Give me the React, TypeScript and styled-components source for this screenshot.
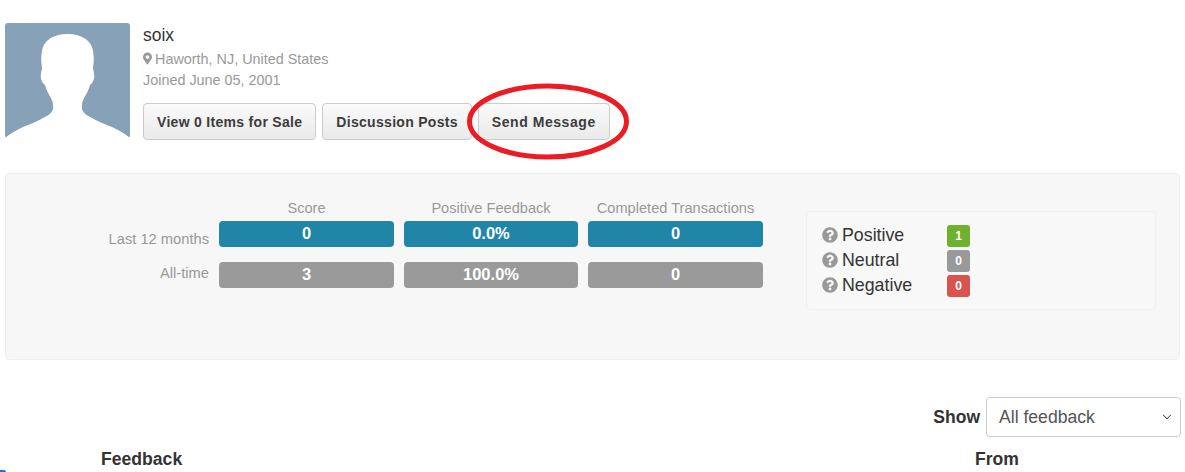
import styled, { createGlobalStyle } from "styled-components";
import { FaMapMarkerAlt, FaQuestionCircle } from "react-icons/fa";
import { ChevronDown } from "lucide-react";

const GlobalStyle = createGlobalStyle`
  html, body {
    margin: 0;
    padding: 0;
    background: #fff;
    overflow: hidden;
  }
  body {
    font-family: "Liberation Sans", Arial, sans-serif;
    color: #333;
  }
`;

const stats = [
  { label: "Last 12 months", labelOffset: 8, tone: "#2085a6", values: ["0", "0.0%", "0"] },
  { label: "All-time", labelOffset: 1, tone: "#9a9a9a", values: ["3", "100.0%", "0"] },
];

const ratings = [
  { label: "Positive", count: 1, color: "#6fb02f" },
  { label: "Neutral", count: 0, color: "#999999" },
  { label: "Negative", count: 0, color: "#d9534f" },
];

const App = () => {
  return (
    <>
      <GlobalStyle />
      <Page>
        <Profile>
          <Avatar>
            <svg viewBox="0 0 125 115" width="125" height="115">
              <rect width="125" height="115" rx="3" fill="#87a1b9" />
              <path
                d="M0 115 C6 110 12 107 18 104 C26 101 33 98 38 95 C46 91 49 88 48 82 C48 79 47 78 46 75 C43 70 41 66 40 62 C37 60 35 55 36 51 C36 48 37 47 37 45 C36 38 36 34 37 28 C38 18 48 11 62.5 11 C77 11 87 18 88 28 C89 34 89 38 88 45 C88 47 89 48 89 51 C90 55 88 60 85 62 C84 66 82 70 79 75 C78 78 77 79 77 82 C76 88 79 91 87 95 C92 98 99 101 107 104 C113 107 119 110 125 115 Z"
                fill="#fff"
              />
            </svg>
          </Avatar>
          <Details>
            <Name>soix</Name>
            <Muted>
              <PinIcon />
              Haworth, NJ, United States
            </Muted>
            <Muted>Joined June 05, 2001</Muted>
            <Actions>
              <ActionButton>View 0 Items for Sale</ActionButton>
              <ActionButton>Discussion Posts</ActionButton>
              <HighlightWrap>
                <ActionButton $spacing={0.55}>Send Message</ActionButton>
                <RedCircle viewBox="0 0 164 80" width="164" height="80">
                  <ellipse cx="82" cy="39.5" rx="78.5" ry="35.5" fill="none" stroke="#ed1c24" strokeWidth="5" />
                </RedCircle>
              </HighlightWrap>
            </Actions>
          </Details>
        </Profile>

        <Well>
          <StatsTable>
            <HeadRow>
              <span />
              <ColumnTitle>Score</ColumnTitle>
              <ColumnTitle>Positive Feedback</ColumnTitle>
              <ColumnTitle>Completed Transactions</ColumnTitle>
            </HeadRow>
            {stats.map((row) => (
              <StatRow key={row.label}>
                <RowLabel $offset={row.labelOffset}>{row.label}</RowLabel>
                {row.values.map((v, i) => (
                  <StatBar key={i} $tone={row.tone}>
                    {v}
                  </StatBar>
                ))}
              </StatRow>
            ))}
          </StatsTable>
          <Legend>
            {ratings.map((r) => (
              <LegendRow key={r.label}>
                <HelpIcon />
                <LegendLabel>{r.label}</LegendLabel>
                <CountBadge $color={r.color}>{r.count}</CountBadge>
              </LegendRow>
            ))}
          </Legend>
        </Well>

        <Filter>
          <FilterLabel>Show</FilterLabel>
          <Select>
            All feedback
            <ChevronDown size={14} strokeWidth={1.75} color="#444" />
          </Select>
        </Filter>

        <TableHead>
          <FeedbackCol>Feedback</FeedbackCol>
          <span>From</span>
        </TableHead>
        <CornerMark />
      </Page>
    </>
  );
};

const Page = styled.div`
  position: relative;
  width: 1185px;
  height: 472px;
  overflow: hidden;
  padding: 23px 5px 0;
  box-sizing: border-box;
`;

const Profile = styled.div`
  display: flex;
  gap: 13px;
  height: 150px;
`;

const Avatar = styled.div`
  width: 125px;
  height: 115px;
  line-height: 0;
`;

const Details = styled.div`
  display: flex;
  flex-direction: column;
`;

const Name = styled.div`
  font-size: 17.5px;
  line-height: 24px;
  margin-bottom: 2px;
  color: #333;
`;

const Muted = styled.div`
  font-size: 14.4px;
  line-height: 21px;
  color: #999;
`;

const PinIcon = styled(FaMapMarkerAlt)`
  width: 9px;
  height: 13px;
  margin-right: 3px;
  vertical-align: -1px;
`;

const Actions = styled.div`
  display: flex;
  gap: 6px;
  margin-top: 12px;
`;

const ActionButton = styled.button<{ $spacing?: number }>`
  height: 37px;
  padding: 0 13px;
  border: 1px solid #ccc;
  border-radius: 4px;
  background: linear-gradient(to bottom, #fafafa, #eaeaea);
  font-family: inherit;
  font-size: 14px;
  font-weight: 700;
  letter-spacing: ${({ $spacing }) => $spacing ?? 0.3}px;
  color: #3c3c3c;
`;

const HighlightWrap = styled.div`
  position: relative;
`;

const RedCircle = styled.svg`
  position: absolute;
  left: -12px;
  top: -21px;
  pointer-events: none;
`;

const Well = styled.div`
  display: flex;
  align-items: flex-start;
  justify-content: space-between;
  width: 1175px;
  height: 187px;
  box-sizing: border-box;
  padding: 24px 23px 0 0;
  background: #f7f7f7;
  border: 1px solid #eeeeee;
  border-radius: 4px;
`;

const StatsTable = styled.div`
  display: flex;
  flex-direction: column;
`;

const columns = "203px 175px 174px 175px";

const HeadRow = styled.div`
  display: grid;
  grid-template-columns: ${columns};
  column-gap: 10px;
  margin-bottom: 3px;
`;

const ColumnTitle = styled.div`
  font-size: 14.6px;
  line-height: 20px;
  text-align: center;
  white-space: nowrap;
  color: #999;
`;

const StatRow = styled.div`
  display: grid;
  grid-template-columns: ${columns};
  column-gap: 10px;
  height: 41px;
`;

const RowLabel = styled.div<{ $offset: number }>`
  font-size: 14.7px;
  line-height: 20px;
  padding-top: ${({ $offset }) => $offset}px;
  text-align: right;
  color: #999;
`;

const StatBar = styled.div<{ $tone: string }>`
  height: 26px;
  line-height: 24px;
  border-radius: 4px;
  background: ${({ $tone }) => $tone};
  color: #fff;
  font-size: 16.5px;
  font-weight: 700;
  text-align: center;
`;

const Legend = styled.div`
  width: 350px;
  height: 99px;
  margin-top: 13px;
  box-sizing: border-box;
  padding: 11px 15px;
  border: 1px solid #f0f0f0;
  border-radius: 4px;
  background: #f8f8f8;
`;

const LegendRow = styled.div`
  display: flex;
  align-items: center;
  height: 25px;
`;

const HelpIcon = styled(FaQuestionCircle)`
  width: 16px;
  height: 16px;
  color: #999;
  margin-right: 4px;
  position: relative;
  top: -1px;
`;

const LegendLabel = styled.span`
  width: 105px;
  font-size: 17.8px;
  color: #333;
`;

const CountBadge = styled.span<{ $color: string }>`
  width: 23px;
  height: 22px;
  line-height: 22px;
  border-radius: 3px;
  background: ${({ $color }) => $color};
  color: #fff;
  font-size: 12px;
  font-weight: 700;
  text-align: center;
`;

const Filter = styled.div`
  display: flex;
  justify-content: flex-end;
  align-items: center;
  gap: 6px;
  margin-top: 37px;
  margin-right: -1px;
`;

const FilterLabel = styled.span`
  font-size: 17.5px;
  font-weight: 700;
  color: #333;
`;

const Select = styled.div`
  display: flex;
  align-items: center;
  justify-content: space-between;
  width: 195px;
  height: 40px;
  box-sizing: border-box;
  padding: 0 6px 0 12px;
  border: 1px solid #ccc;
  border-radius: 4px;
  font-size: 17.6px;
  color: #555;
`;

const TableHead = styled.div`
  display: flex;
  margin-top: 11px;
  padding-left: 96px;
  font-size: 17.6px;
  font-weight: 700;
  line-height: 22px;
  color: #333;
`;

const FeedbackCol = styled.span`
  width: 874px;
`;

const CornerMark = styled.div`
  position: absolute;
  left: 0;
  bottom: 0;
  width: 6px;
  height: 2px;
  background: #2a6fd6;
  border-top-right-radius: 4px;
`;

export default App;
